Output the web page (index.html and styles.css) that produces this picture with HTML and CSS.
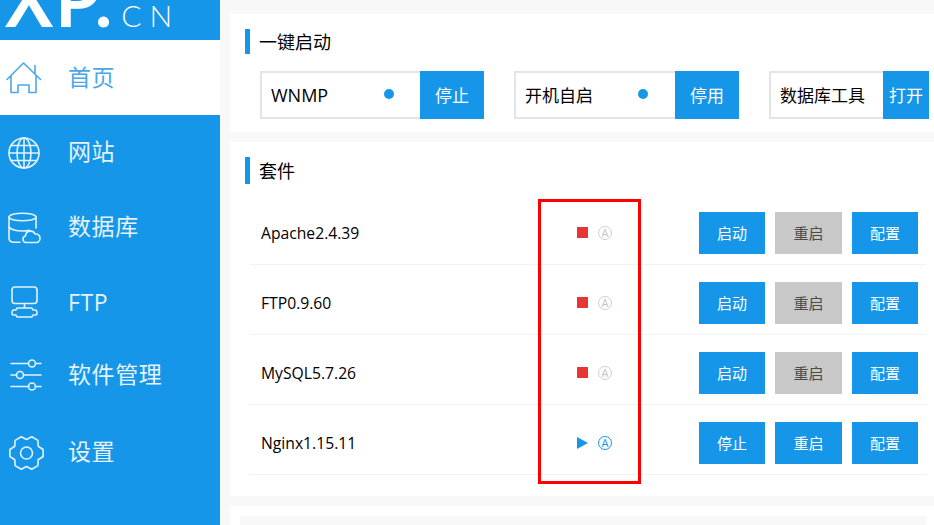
FILE: index.html
```html
<!DOCTYPE html>
<html lang="zh-CN">
<head>
<meta charset="utf-8">
<title>XP.CN</title>
<link rel="stylesheet" href="styles.css">
</head>
<body>
<div class="app">
  <aside class="sidebar">
    <div class="logo"><span class="logo-main">XP.</span><span class="logo-sub">CN</span></div>
    <nav class="nav">
      <a class="nav-item active">
        <svg class="nav-icon" viewBox="0 0 48 48"><path d="M7 25.500 23.500 9 40.500 25.500M11 22v16.500h7V31h11v7.500h7V22M35 19.500V11.500"/></svg>
        <span class="nav-label">首页</span>
      </a>
      <a class="nav-item">
        <svg class="nav-icon" viewBox="0 0 48 48"><circle cx="24" cy="24" r="15"/><ellipse cx="24" cy="24" rx="7" ry="15"/><path d="M24 9v30M9 24h30M11 16.500h26M11 31.500h26"/></svg>
        <span class="nav-label">网站</span>
      </a>
      <a class="nav-item">
        <svg class="nav-icon" viewBox="0 0 48 48"><ellipse cx="22.500" cy="13" rx="13.500" ry="3.800"/><path d="M9 13v21q0 4 5 4.300h6M36 13v11M9 23q3 4 13.500 4 4 0 7-.6"/><path d="M26 38.500a3.300 3.300 0 0 1-.5-6.500 5 5 0 0 1 9.500-2 4.300 4.300 0 0 1 1.500 8.500z"/></svg>
        <span class="nav-label">数据库</span>
      </a>
      <a class="nav-item">
        <svg class="nav-icon" viewBox="0 0 48 48"><rect x="12" y="8" width="25" height="16.500" rx="3"/><path d="M24.500 24.500V29M17 29h15l1 2h3l1 2v2l-1 1h-3l-1 2H17l-1-2h-3l-1-1v-2l1-2h3z"/></svg>
        <span class="nav-label nav-label-latin">FTP</span>
      </a>
      <a class="nav-item item-tools">
        <svg class="nav-icon" viewBox="0 0 48 48"><path d="M11 12.500h17.500M35.500 12.500H41M11 24h5.500M23.500 24H41M11 35.500h17.500M35.500 35.500H41"/><circle cx="32" cy="12.500" r="3.500"/><circle cx="20" cy="24" r="3.500"/><circle cx="32" cy="35.500" r="3.500"/></svg>
        <span class="nav-label">软件管理</span>
      </a>
      <a class="nav-item item-settings">
        <svg class="nav-icon" viewBox="0 0 48 48"><g transform="translate(26.500 24)"><path d="M16.600-3.500 16.600 3.500 11.700 6.750 11.400 12.600 5.250 16.200 0 13.500-5.250 16.200-11.400 12.600-11.700 6.750-16.600 3.500-16.600-3.500-11.700-6.750-11.400-12.600-5.250-16.200 0-13.500 5.250-16.200 11.400-12.600 11.700-6.750z"/><circle r="6"/></g></svg>
        <span class="nav-label">设置</span>
      </a>
    </nav>
  </aside>
  <main class="main">
    <section class="card card-start">
      <h2 class="title title-start">一键启动</h2>
      <div class="quick">
        <div class="field field-wnmp"><div class="field-box"><span>WNMP</span><i class="dot"></i></div><button class="btn field-btn">停止</button></div>
        <div class="field field-auto"><div class="field-box"><span class="cjk">开机自启</span><i class="dot"></i></div><button class="btn field-btn">停用</button></div>
        <div class="field field-db"><div class="field-box"><span class="cjk">数据库工具</span></div><button class="btn field-btn field-btn-small">打开</button></div>
      </div>
    </section>
    <section class="card card-suite">
      <h2 class="title title-suite">套件</h2>
      <div class="rows">
        <div class="row">
          <span class="row-name">Apache2.4.39</span>
          <div class="status"><i class="stop"></i><span class="auto">A</span></div>
          <div class="actions"><button class="btn act">启动</button><button class="btn act mid off">重启</button><button class="btn act">配置</button></div>
        </div>
        <div class="row">
          <span class="row-name">FTP0.9.60</span>
          <div class="status"><i class="stop"></i><span class="auto">A</span></div>
          <div class="actions"><button class="btn act">启动</button><button class="btn act mid off">重启</button><button class="btn act">配置</button></div>
        </div>
        <div class="row">
          <span class="row-name">MySQL5.7.26</span>
          <div class="status"><i class="stop"></i><span class="auto">A</span></div>
          <div class="actions"><button class="btn act">启动</button><button class="btn act mid off">重启</button><button class="btn act">配置</button></div>
        </div>
        <div class="row">
          <span class="row-name">Nginx1.15.11</span>
          <div class="status"><i class="play"></i><span class="auto on">A</span></div>
          <div class="actions"><button class="btn act">停止</button><button class="btn act mid">重启</button><button class="btn act">配置</button></div>
        </div>
      </div>
      <div class="highlight"></div>
    </section>
    <section class="card card-next"><div class="next-inner"></div></section>
  </main>
</div>
</body>
</html>
```
FILE: styles.css
```css
* { box-sizing: border-box; }
html, body { margin: 0; height: 100%; overflow: hidden; }
body {
  font-family: "Open Sans", "Noto Sans CJK SC", sans-serif;
  color: #000;
  background: #f8f8f8;
}
.app { display: flex; height: 525px; overflow: hidden; }

.sidebar { width: 220px; flex: none; background: #1596e8; color: #e4f2fc; }
.logo {
  height: 40px;
  overflow: hidden;
  display: flex;
  align-items: baseline;
  color: #fff;
  padding-left: 5px;
}
.logo-main {
  font: 700 72px/1 "Lato", sans-serif;
  margin-top: -37px;
  letter-spacing: 2px;
}
.logo-sub {
  font: 300 30px/1 "Lato", sans-serif;
  letter-spacing: 8px;
  margin-left: 7px;
}
.nav-item {
  display: flex;
  align-items: center;
  gap: 20px;
  height: 75px;
  font-size: 23px;
  letter-spacing: .6px;
}
.nav-label { padding-bottom: 5px; }
.nav-label-latin { padding-bottom: 1px; }
.nav-item.active { background: #fff; color: #4aa8ea; }
.active .nav-label { padding-bottom: 3px; }
.item-tools { height: 70px; }
.item-settings { margin-top: 5px; }
.nav-icon {
  width: 48px;
  height: 48px;
  flex: none;
  fill: none;
  stroke: currentColor;
  stroke-width: 1.6;
  stroke-linejoin: round;
  stroke-linecap: round;
}

.main { flex: 1; min-width: 0; padding: 14px 0 0 10px; }
.card { background: #fff; padding-left: 15px; position: relative; margin-bottom: 10px; }
.card-start { height: 118px; padding-top: 15px; }
.card-suite { height: 354px; padding-top: 15px; }
.card-next { padding: 10px 8px 0 10px; height: 40px; margin: 0; }
.next-inner { background: #f8f8f8; height: 30px; }

.title {
  margin: 0;
  border-left: 5px solid #1596e8;
  padding-left: 9px;
  font-size: 18px;
  font-weight: 400;
  display: flex;
  align-items: center;
  line-height: 1;
}
.title-start { height: 25px; }
.title-suite { height: 27px; }

.quick { display: flex; margin: 17px 0 0 15px; gap: 30px; }
.field { display: flex; height: 48px; }
.field-box {
  border: 2px solid #e4e4e4;
  border-right: 0;
  display: flex;
  align-items: center;
  justify-content: space-between;
  padding: 0 26px 0 9px;
  font-size: 17px;
  white-space: nowrap;
}
.cjk { padding-bottom: 2px; }
.field-wnmp .field-box { width: 160px; font-size: 18px; }
.field-auto .field-box { width: 161px; padding-right: 27px; }
.field-db .field-box { width: 114px; padding-right: 0; }
.dot { width: 10px; height: 10px; border-radius: 50%; background: #1596e8; margin-top: -2px; }
.btn {
  border: 0;
  margin: 0;
  padding: 0 0 2px;
  background: #1596e8;
  color: #fff;
  font-family: inherit;
}
.field-btn { width: 64px; font-size: 17px; }
.field-btn-small { width: 46px; }

.rows { margin: 11px 8px 0 5px; }
.row {
  display: flex;
  align-items: center;
  height: 70px;
  padding: 7px 8px 0 11px;
  border-bottom: 1px solid #f2f2f2;
}
.row-name { width: 316px; font-size: 15.7px; }
.status { display: flex; align-items: center; gap: 10px; }
.stop { width: 11px; height: 11px; background: #e53535; margin-top: -1px; }
.play {
  width: 0;
  height: 0;
  border-left: 11px solid #1596e8;
  border-top: 6px solid transparent;
  border-bottom: 6px solid transparent;
  margin-top: -1px;
}
.auto {
  width: 14px;
  height: 14px;
  border: 1px solid #cfcfcf;
  border-radius: 50%;
  color: #c4c4c4;
  font-size: 11px;
  line-height: 12px;
  text-align: center;
}
.auto.on { border-color: #1596e8; color: #1596e8; }
.actions { margin-left: auto; display: flex; gap: 10px; }
.act { width: 66px; height: 42px; font-size: 15px; }
.mid { width: 67px; }
.off { background: #c8c8c8; color: #4a4a4a; }

.highlight {
  position: absolute;
  left: 308px;
  top: 57px;
  width: 103px;
  height: 285px;
  border: 3px solid #f00;
  pointer-events: none;
}
```
